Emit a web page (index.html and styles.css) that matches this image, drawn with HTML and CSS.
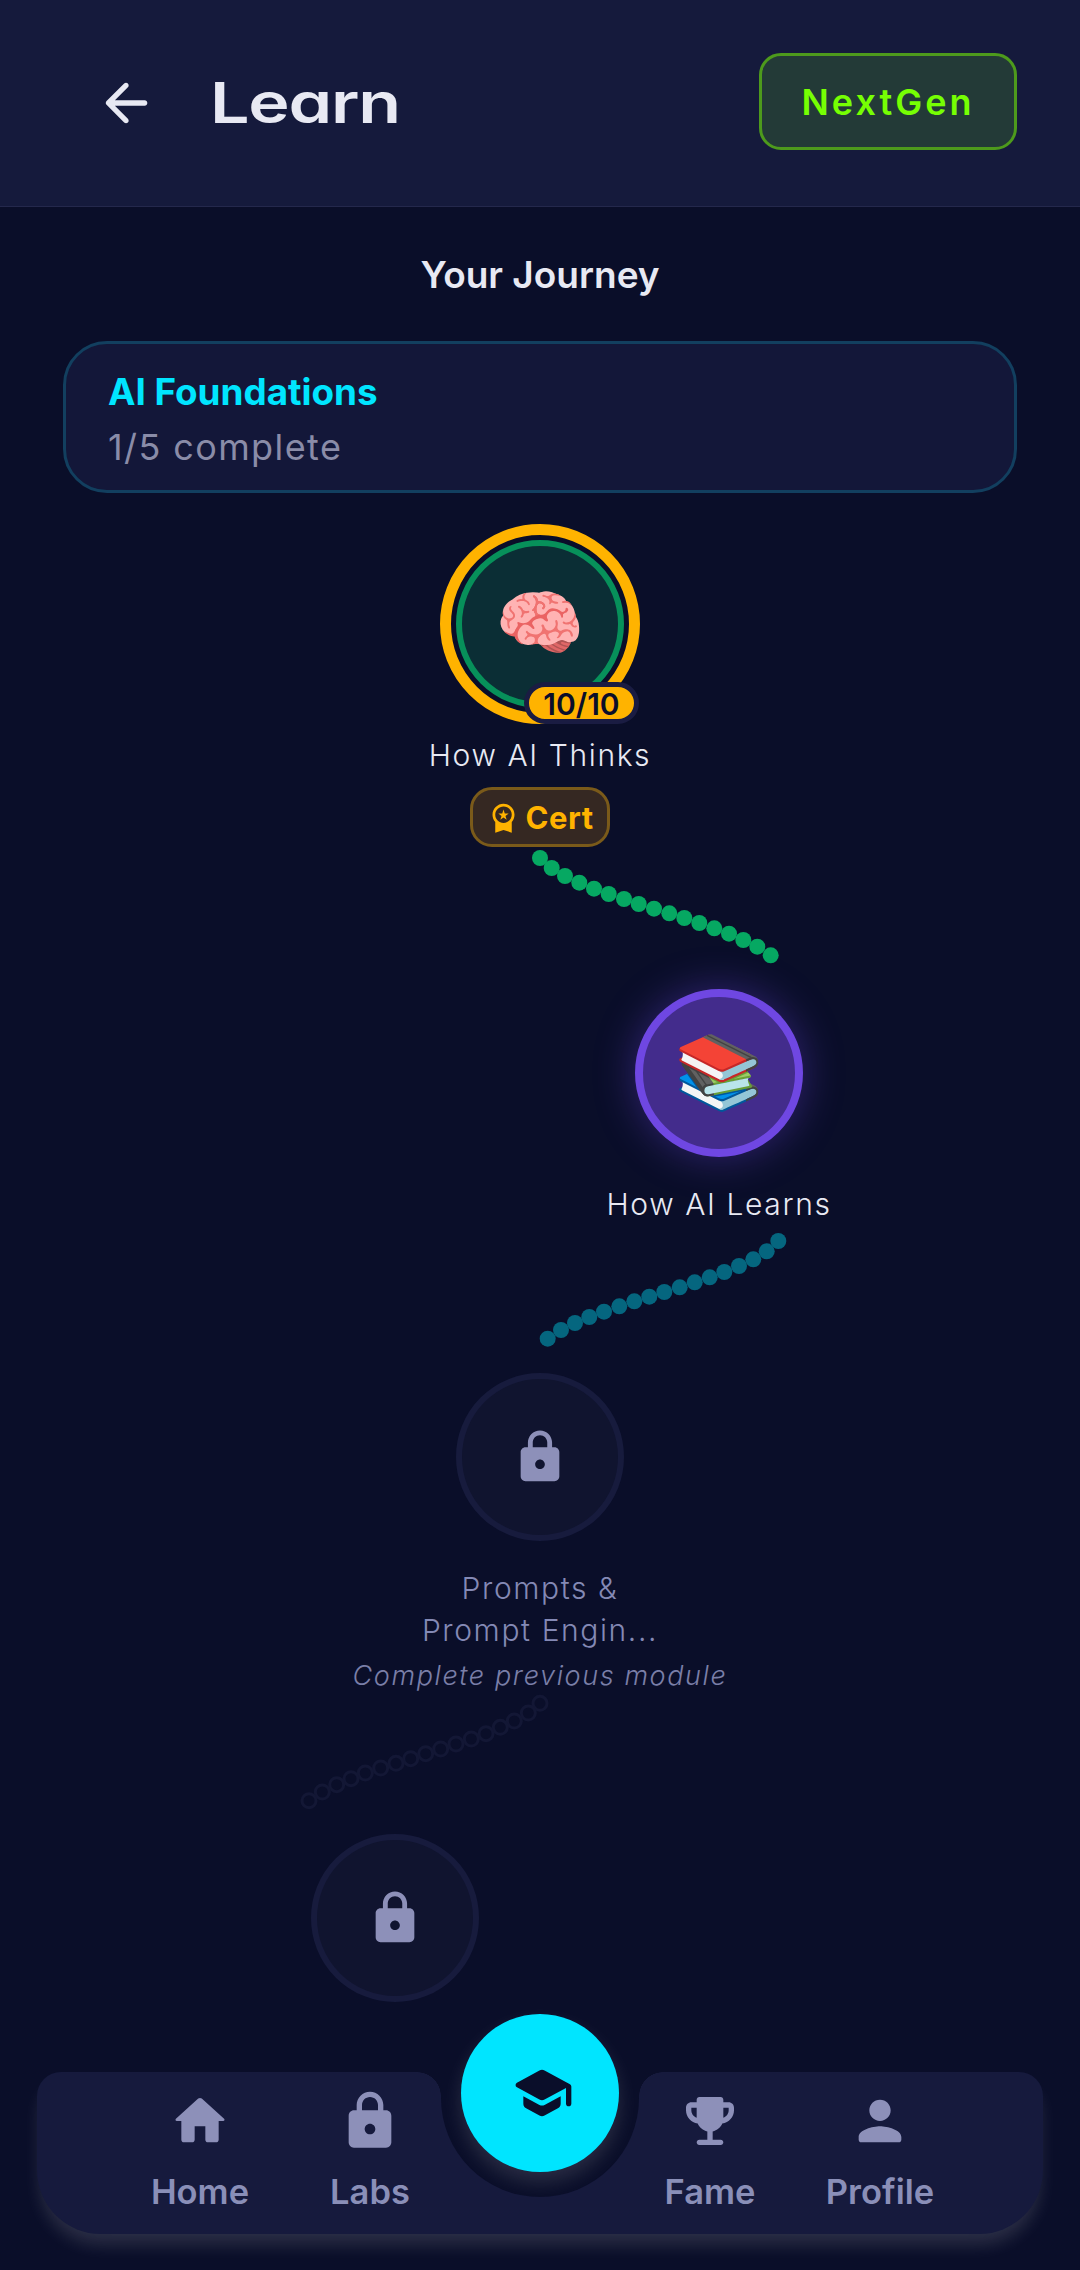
FILE: index.html
```html
<!DOCTYPE html>
<html lang="en">
<head>
    <meta charset="UTF-8">
    <meta name="viewport" content="width=device-width, initial-scale=1.0">
    <title>Learn</title>
    <link rel="stylesheet" href="styles.css">
</head>
<body>
    <div class="screen">
        <div class="header">
            <svg class="back-icon" viewBox="0 0 24 24"><path d="M19 11H7.83l4.88-4.88c.39-.39.39-1.03 0-1.42-.39-.39-1.02-.39-1.41 0l-6.59 6.59c-.39.39-.39 1.02 0 1.41l6.59 6.59c.39.39 1.02.39 1.41 0 .39-.39.39-1.02 0-1.41L7.83 13H19c.55 0 1-.45 1-1s-.45-1-1-1z"/></svg>
            <h1 class="page-title">Learn</h1>
            <div class="tier-badge">NextGen</div>
        </div>

        <h2 class="journey-title">Your Journey</h2>

        <div class="track-card">
            <div class="track-name">AI Foundations</div>
            <div class="track-progress">1/5 complete</div>
        </div>

        <div class="journey">
            <svg class="dots" viewBox="0 493 1080 1777">
                <g class="dots-done">
                    <circle cx="540" cy="858" r="8"/><circle cx="551.7" cy="868" r="8"/><circle cx="565" cy="876" r="8"/><circle cx="579.3" cy="882.7" r="8"/><circle cx="594" cy="888.7" r="8"/><circle cx="608.7" cy="894" r="8"/><circle cx="624" cy="899" r="8"/><circle cx="638.7" cy="904" r="8"/><circle cx="654" cy="908.7" r="8"/><circle cx="669.3" cy="913.3" r="8"/><circle cx="684.3" cy="918" r="8"/><circle cx="699.3" cy="923" r="8"/><circle cx="714.3" cy="928.3" r="8"/><circle cx="729" cy="933.7" r="8"/><circle cx="743.3" cy="940" r="8"/><circle cx="757.3" cy="946.7" r="8"/><circle cx="770.7" cy="955.3" r="8"/>
                </g>
                <g class="dots-next">
                    <circle cx="778.3" cy="1241" r="8"/><circle cx="766.7" cy="1251.3" r="8"/><circle cx="753.3" cy="1259.3" r="8"/><circle cx="739" cy="1266" r="8"/><circle cx="724.3" cy="1272" r="8"/><circle cx="709.7" cy="1277.3" r="8"/><circle cx="694.7" cy="1282.3" r="8"/><circle cx="679.7" cy="1287.3" r="8"/><circle cx="664.3" cy="1292" r="8"/><circle cx="649.3" cy="1296.7" r="8"/><circle cx="634.3" cy="1301.3" r="8"/><circle cx="619.3" cy="1306.3" r="8"/><circle cx="604" cy="1311.7" r="8"/><circle cx="589.3" cy="1317" r="8"/><circle cx="575" cy="1323" r="8"/><circle cx="561" cy="1330" r="8"/><circle cx="547.7" cy="1338.7" r="8"/>
                </g>
                <g class="dots-locked">
                    <circle cx="540" cy="1703.3" r="7"/><circle cx="528.3" cy="1713" r="7"/><circle cx="514.3" cy="1721" r="7"/><circle cx="500.3" cy="1727.3" r="7"/><circle cx="486" cy="1733.7" r="7"/><circle cx="471.3" cy="1739" r="7"/><circle cx="456" cy="1744" r="7"/><circle cx="440.7" cy="1749" r="7"/><circle cx="425.7" cy="1753.7" r="7"/><circle cx="410.7" cy="1758.7" r="7"/><circle cx="396" cy="1763.3" r="7"/><circle cx="380.7" cy="1768" r="7"/><circle cx="365.3" cy="1773" r="7"/><circle cx="351" cy="1778.7" r="7"/><circle cx="336.7" cy="1784.7" r="7"/><circle cx="322.3" cy="1792" r="7"/><circle cx="309" cy="1800.7" r="7"/>
                </g>
            </svg>

            <div class="node node-first">
                <div class="circle circle-done">
                    <span class="emoji">🧠</span>
                    <div class="score-ring"></div>
                    <div class="score-badge">10/10</div>
                </div>
                <div class="node-label">How AI Thinks</div>
                <div class="cert">
                    <svg class="cert-icon" viewBox="0 0 24 24"><path d="M9.68 13.69 12 11.93l2.31 1.76-.88-2.85L15.75 9h-2.84L12 6.19 11.09 9H8.25l2.31 1.84-.88 2.85zM20 10c0-4.42-3.58-8-8-8s-8 3.58-8 8c0 2.03.76 3.87 2 5.28V23l6-2 6 2v-7.72c1.24-1.41 2-3.25 2-5.28zm-8-6c3.31 0 6 2.69 6 6s-2.69 6-6 6-6-2.69-6-6 2.69-6 6-6z"/></svg>
                    <span>Cert</span>
                </div>
            </div>

            <div class="node node-second">
                <div class="circle circle-active">
                    <span class="emoji">📚</span>
                </div>
                <div class="node-label">How AI Learns</div>
            </div>

            <div class="node node-third">
                <div class="circle circle-locked">
                    <svg class="lock-icon" viewBox="0 0 24 24"><path d="M18 8h-1V6c0-2.76-2.24-5-5-5S7 3.24 7 6v2H6c-1.1 0-2 .9-2 2v10c0 1.1.9 2 2 2h12c1.1 0 2-.9 2-2V10c0-1.1-.9-2-2-2zm-6 9c-1.1 0-2-.9-2-2s.9-2 2-2 2 .9 2 2-.9 2-2 2zM9 8V6c0-1.66 1.34-3 3-3s3 1.34 3 3v2H9z"/></svg>
                </div>
                <div class="node-label locked">Prompts &amp;<br>Prompt Engin...</div>
                <div class="node-hint">Complete previous module</div>
            </div>

            <div class="node node-fourth">
                <div class="circle circle-locked">
                    <svg class="lock-icon" viewBox="0 0 24 24"><path d="M18 8h-1V6c0-2.76-2.24-5-5-5S7 3.24 7 6v2H6c-1.1 0-2 .9-2 2v10c0 1.1.9 2 2 2h12c1.1 0 2-.9 2-2V10c0-1.1-.9-2-2-2zm-6 9c-1.1 0-2-.9-2-2s.9-2 2-2 2 .9 2 2-.9 2-2 2zM9 8V6c0-1.66 1.34-3 3-3s3 1.34 3 3v2H9z"/></svg>
                </div>
            </div>
        </div>

        <div class="tabbar">
            <div class="tab">
                <svg viewBox="0 0 24 24"><path d="M10 19v-5h4v5c0 .55.45 1 1 1h3c.55 0 1-.45 1-1v-7h1.7c.46 0 .68-.57.33-.87L12.67 3.6c-.38-.34-.96-.34-1.34 0l-8.36 7.53c-.34.3-.13.87.33.87H5v7c0 .55.45 1 1 1h3c.55 0 1-.45 1-1z"/></svg>
                <span>Home</span>
            </div>
            <div class="tab">
                <svg viewBox="0 0 24 24"><path d="M18 8h-1V6c0-2.76-2.24-5-5-5S7 3.24 7 6v2H6c-1.1 0-2 .9-2 2v10c0 1.1.9 2 2 2h12c1.1 0 2-.9 2-2V10c0-1.1-.9-2-2-2zm-6 9c-1.1 0-2-.9-2-2s.9-2 2-2 2 .9 2 2-.9 2-2 2zM9 8V6c0-1.66 1.34-3 3-3s3 1.34 3 3v2H9z"/></svg>
                <span>Labs</span>
            </div>
            <div class="tab-spacer"></div>
            <div class="tab">
                <svg viewBox="0 0 24 24"><path d="M19 5h-2V4c0-.55-.45-1-1-1H8c-.55 0-1 .45-1 1v1H5c-1.1 0-2 .9-2 2v1c0 2.55 1.92 4.63 4.39 4.94.63 1.5 1.98 2.63 3.61 2.96V19H8c-.55 0-1 .45-1 1s.45 1 1 1h8c.55 0 1-.45 1-1s-.45-1-1-1h-3v-3.1c1.63-.33 2.98-1.46 3.61-2.96C19.08 12.63 21 10.55 21 8V7c0-1.1-.9-2-2-2zM5 8V7h2v3.82C5.84 10.4 5 9.3 5 8zm14 0c0 1.3-.84 2.4-2 2.82V7h2v1z"/></svg>
                <span>Fame</span>
            </div>
            <div class="tab">
                <svg viewBox="0 0 24 24"><path d="M12 12c2.21 0 4-1.79 4-4s-1.79-4-4-4-4 1.79-4 4 1.79 4 4 4zm0 2c-2.67 0-8 1.34-8 4v1c0 .55.45 1 1 1h14c.55 0 1-.45 1-1v-1c0-2.66-5.33-4-8-4z"/></svg>
                <span>Profile</span>
            </div>
            <div class="notch"></div>
            <div class="learn-button">
                <svg viewBox="0 0 24 24"><path d="M5 13.18v2.81c0 .73.4 1.41 1.04 1.76l5 2.73c.6.33 1.32.33 1.92 0l5-2.73c.64-.35 1.04-1.03 1.04-1.76v-2.81l-6.04 3.3c-.6.33-1.32.33-1.92 0L5 13.18zm6.04-9.66l-8.43 4.6c-.69.38-.69 1.38 0 1.76l8.43 4.6c.6.33 1.32.33 1.92 0L21 10.09V16c0 .55.45 1 1 1s1-.45 1-1V9.59c0-.37-.2-.7-.52-.88l-9.52-5.19c-.6-.32-1.32-.32-1.92 0z"/></svg>
            </div>
        </div>
    </div>
</body>
</html>
```

FILE: styles.css
```css
* {
    box-sizing: border-box;
}
body {
    margin: 0;
    background: #0a0e29;
    font-family: Inter, "Noto Sans", sans-serif;
    color: #e8e9f3;
}
.screen {
    position: relative;
    width: 1080px;
    height: 2270px;
    overflow: hidden;
    background: #0a0e29;
}
.header {
    display: flex;
    align-items: center;
    height: 207px;
    padding: 0 63px 0 94px;
    background: #151a3c;
    border-bottom: 1px solid #24284c;
}
.back-icon {
    width: 64px;
    height: 64px;
    fill: #e8e9f3;
}
.page-title {
    margin: 0 0 0 52px;
    font-size: 56px;
    font-weight: 600;
    letter-spacing: -1px;
    font-feature-settings: "cv11";
    transform: scaleX(1.25);
    transform-origin: left center;
}
.tier-badge {
    margin-left: auto;
    margin-bottom: 3px;
    display: flex;
    align-items: center;
    justify-content: center;
    width: 258px;
    height: 97px;
    background: #233a37;
    border: 3px solid #4d9a1c;
    border-radius: 22px;
    color: #76ff03;
    font-size: 36px;
    font-weight: 600;
    letter-spacing: 3px;
}
.journey-title {
    margin: 48px 0 0;
    line-height: 40px;
    font-size: 37px;
    font-weight: 600;
    text-align: center;
}
.track-card {
    margin: 46px 63px 0 63px;
    height: 152px;
    padding: 26px 42px;
    background: #131739;
    border: 3px solid #123f5f;
    border-radius: 44px;
}
.track-name {
    line-height: 44px;
    font-size: 36.8px;
    font-weight: 700;
    color: #00e5ff;
}
.track-progress {
    margin-top: 11px;
    line-height: 44px;
    font-size: 36px;
    letter-spacing: 1.4px;
    color: #8a8ca8;
}

/* module map, nodes sit on a free canvas */
.journey {
    position: relative;
    height: 1777px;
}
.dots {
    position: absolute;
    top: 0;
    left: 0;
    width: 1080px;
    height: 1777px;
}
.dots-done {
    fill: #06a862;
}
.dots-next {
    fill: #05667f;
}
.dots-locked {
    fill: none;
    stroke: #131735;
    stroke-width: 3;
}
.node {
    position: absolute;
    width: 420px;
    display: flex;
    flex-direction: column;
    align-items: center;
    text-align: center;
}
.node-first {
    top: 47px;
    left: 330px;
}
.node-second {
    top: 496px;
    left: 509px;
}
.node-third {
    top: 880px;
    left: 330px;
}
.node-fourth {
    top: 1341px;
    left: 185px;
}
.circle {
    position: relative;
    display: flex;
    align-items: center;
    justify-content: center;
    width: 168px;
    height: 168px;
    border-radius: 50%;
}
.circle-done {
    background: #0b2e35;
    border: 6px solid #07905a;
}
.circle-active {
    background: #432c8c;
    border: 8px solid #6f47e2;
    box-shadow: 0 0 40px rgba(111, 71, 226, 0.4);
}
.circle-locked {
    background: #10142f;
    border: 6px solid #171b3d;
}
.emoji {
    font-size: 72px;
    line-height: 1;
    font-family: "Noto Color Emoji", sans-serif;
}
.lock-icon {
    width: 58px;
    height: 58px;
    fill: #8d90b9;
}
.score-ring {
    position: absolute;
    top: -22px;
    left: -22px;
    width: 200px;
    height: 200px;
    border: 11px solid #ffb300;
    border-radius: 50%;
}
.score-badge {
    position: absolute;
    top: 136px;
    left: 62px;
    width: 115px;
    height: 42px;
    border: 5px solid #1a1c42;
    border-radius: 21px;
    background: #ffb300;
    color: #0a0e2a;
    font-size: 30px;
    font-weight: 600;
    line-height: 34px;
    text-align: center;
}
.node-label {
    margin-top: 26px;
    line-height: 42px;
    font-size: 30px;
    font-weight: 300;
    letter-spacing: 1.6px;
}
.node-label.locked {
    color: #8489b5;
}
.node-hint {
    margin-top: 7px;
    line-height: 36px;
    font-size: 27px;
    font-weight: 300;
    font-style: italic;
    letter-spacing: 1.6px;
    color: #7a7fa8;
}
.cert {
    display: flex;
    align-items: center;
    justify-content: center;
    gap: 6px;
    margin-top: 11px;
    width: 140px;
    height: 60px;
    background: #352822;
    border: 3px solid #7a5a1a;
    border-radius: 22px;
    color: #ffb300;
    font-size: 31px;
    font-weight: 700;
    letter-spacing: .5px;
}
.cert-icon {
    width: 33px;
    height: 33px;
    fill: #ffb300;
}

/* bottom nav */
.tabbar {
    position: absolute;
    left: 37px;
    bottom: 36px;
    display: flex;
    width: 1006px;
    height: 162px;
    padding: 17px 0 0 78px;
    background: #161a3d;
    border-radius: 24px 24px 64px 64px;
    box-shadow: 0 14px 18px -4px rgba(255, 255, 255, 0.14);
}
.tab {
    display: flex;
    flex-direction: column;
    align-items: center;
    width: 170px;
    color: #8a8fb8;
    font-size: 34.5px;
    font-weight: 600;
}
.tab svg {
    width: 64px;
    height: 64px;
    fill: #8d90b9;
}
.tab span {
    margin-top: 20px;
    line-height: 38px;
}
.tab-spacer {
    width: 170px;
}
.notch {
    position: absolute;
    top: 0;
    left: 404px;
    width: 198px;
    height: 125px;
    background: #0a0e29;
    border-radius: 0 0 99px 99px;
}
.notch::before,
.notch::after {
    content: "";
    position: absolute;
    top: 0;
    width: 24px;
    height: 24px;
}
.notch::before {
    left: -24px;
    background: radial-gradient(circle at 0 100%, transparent 23.5px, #0a0e29 24px);
}
.notch::after {
    right: -24px;
    background: radial-gradient(circle at 100% 100%, transparent 23.5px, #0a0e29 24px);
}
.learn-button {
    position: absolute;
    top: -58px;
    left: 424px;
    display: flex;
    align-items: center;
    justify-content: center;
    width: 158px;
    height: 158px;
    padding-left: 3px;
    background: #00e5ff;
    border-radius: 50%;
    box-shadow: 0 10px 20px rgba(255, 255, 255, 0.13);
}
.learn-button svg {
    width: 64px;
    height: 64px;
    fill: #0a0e2a;
}
```
